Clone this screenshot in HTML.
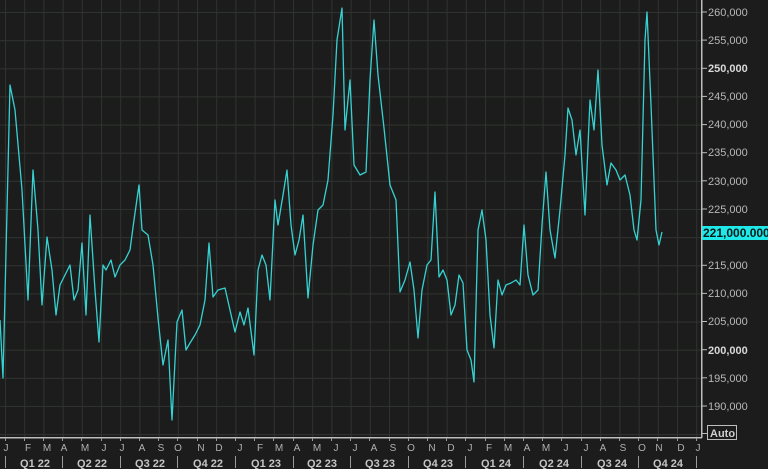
<!DOCTYPE html>
<html><head><meta charset="utf-8"><style>
html,body{margin:0;padding:0;background:#1c1c1c;}
svg{display:block;font-family:"Liberation Sans",sans-serif;}
</style></head><body>
<svg width="768" height="469" viewBox="0 0 768 469" xmlns="http://www.w3.org/2000/svg">
<defs>
<pattern id="gv" patternUnits="userSpaceOnUse" x="5" y="0" width="19.2" height="469"><rect x="0" y="0" width="1" height="469" fill="#2f332f"/></pattern>
<pattern id="gh" patternUnits="userSpaceOnUse" x="0" y="12" width="768" height="28.14"><rect x="0" y="0" width="768" height="1" fill="#2f332f"/></pattern>
</defs>
<rect width="768" height="469" fill="#1c1c1c"/>
<rect x="0" y="0" width="701" height="437" fill="url(#gv)"/>
<rect x="0" y="0" width="701" height="437" fill="url(#gh)"/>
<polyline fill="none" stroke="#36d2d2" stroke-width="1.3" stroke-linejoin="round" points="0,320 3,378 10,85 15,110 22,190 28,300 33,170 38,230 42,305 47,237 52,270 56,315 60,285 65,275 70,265 74,300 78,290 82,243 86,315 90,215 95,290 99,342 103,265 106,270 111,260 115,277 120,265 125,260 130,250 134,220 139,185 142,230 148,235 153,265 158,318 163,365 168,340 172,420 177,322 182,310 186,350 190,343 195,335 200,325 205,300 209,243 213,297 218,290 225,288 230,310 235,332 240,312 244,325 248,308 254,355 258,270 262,255 266,265 270,300 275,200 278,225 283,195 287,170 291,225 295,255 299,240 303,215 308,298 313,245 318,210 323,205 328,180 333,115 337,40 342,8 345,130 350,80 354,165 360,175 366,172 370,80 374,20 378,75 384,128 390,185 396,200 400,292 405,280 410,262 414,290 418,338 422,290 427,265 431,260 435,192 439,277 443,270 447,280 451,315 455,305 459,275 463,283 467,350 471,360 474,382 478,230 482,210 486,240 490,315 494,348 498,280 502,295 506,285 511,283 516,280 520,285 524,225 528,275 533,295 538,290 542,225 546,172 550,230 555,258 560,210 565,155 568,108 572,120 576,155 580,130 585,215 590,100 594,130 598,70 602,145 607,185 611,163 616,170 620,180 625,175 630,195 634,230 637,240 641,200 645,40 647,12 651,105 656,230 659,245 662,232"/>
<!-- axes -->
<rect x="701" y="0" width="1.5" height="438" fill="#bdbdbd"/>
<rect x="0" y="437" width="702" height="1.5" fill="#bdbdbd"/>
<g fill="#bdbdbd">
<rect x="702" y="11.5" width="5" height="1"/><rect x="702" y="39.6" width="5" height="1"/><rect x="702" y="67.8" width="5" height="1"/><rect x="702" y="95.9" width="5" height="1"/><rect x="702" y="124.1" width="5" height="1"/><rect x="702" y="152.2" width="5" height="1"/><rect x="702" y="180.3" width="5" height="1"/><rect x="702" y="208.5" width="5" height="1"/><rect x="702" y="264.8" width="5" height="1"/><rect x="702" y="292.9" width="5" height="1"/><rect x="702" y="321" width="5" height="1"/><rect x="702" y="349.2" width="5" height="1"/><rect x="702" y="377.3" width="5" height="1"/><rect x="702" y="405.5" width="5" height="1"/><rect x="702" y="433" width="5" height="1"/>
</g>
<g font-size="11" fill="#b8b8b8">
<text x="708" y="16">260,000</text>
<text x="708" y="44">255,000</text>
<text x="708" y="72" font-weight="bold" fill="#d8d8d8">250,000</text>
<text x="708" y="100">245,000</text>
<text x="708" y="128">240,000</text>
<text x="708" y="156">235,000</text>
<text x="708" y="185">230,000</text>
<text x="708" y="213">225,000</text>
<text x="708" y="269">215,000</text>
<text x="708" y="297">210,000</text>
<text x="708" y="325">205,000</text>
<text x="708" y="354" font-weight="bold" fill="#d8d8d8">200,000</text>
<text x="708" y="382">195,000</text>
<text x="708" y="410">190,000</text>
</g>
<rect x="702" y="226" width="66" height="14" fill="#1ee8e8"/>
<text x="703" y="237" font-size="12" font-weight="bold" fill="#0a1a1a">221,000.000</text>
<rect x="707.5" y="425.5" width="29" height="14" fill="none" stroke="#bdbdbd" stroke-width="1"/>
<text x="710" y="437" font-size="11" font-weight="bold" fill="#cfcfcf">Auto</text>
<!-- month ticks -->
<g fill="#9a9a9a">
<rect x="5" y="438" width="1" height="3"/><rect x="24" y="438" width="1" height="3"/><rect x="43" y="438" width="1" height="3"/><rect x="62" y="438" width="1" height="3"/><rect x="81" y="438" width="1" height="3"/><rect x="101" y="438" width="1" height="3"/><rect x="120" y="438" width="1" height="3"/><rect x="139" y="438" width="1" height="3"/><rect x="158" y="438" width="1" height="3"/><rect x="177" y="438" width="1" height="3"/><rect x="197" y="438" width="1" height="3"/><rect x="216" y="438" width="1" height="3"/><rect x="235" y="438" width="1" height="3"/><rect x="254" y="438" width="1" height="3"/><rect x="273" y="438" width="1" height="3"/><rect x="293" y="438" width="1" height="3"/><rect x="312" y="438" width="1" height="3"/><rect x="331" y="438" width="1" height="3"/><rect x="350" y="438" width="1" height="3"/><rect x="369" y="438" width="1" height="3"/><rect x="389" y="438" width="1" height="3"/><rect x="408" y="438" width="1" height="3"/><rect x="427" y="438" width="1" height="3"/><rect x="446" y="438" width="1" height="3"/><rect x="465" y="438" width="1" height="3"/><rect x="485" y="438" width="1" height="3"/><rect x="504" y="438" width="1" height="3"/><rect x="523" y="438" width="1" height="3"/><rect x="542" y="438" width="1" height="3"/><rect x="561" y="438" width="1" height="3"/><rect x="581" y="438" width="1" height="3"/><rect x="600" y="438" width="1" height="3"/><rect x="619" y="438" width="1" height="3"/><rect x="638" y="438" width="1" height="3"/><rect x="657" y="438" width="1" height="3"/><rect x="677" y="438" width="1" height="3"/><rect x="696" y="438" width="1" height="3"/>
</g>
<g font-size="10" fill="#b0b0b0" text-anchor="middle">
<text x="6" y="451">J</text><text x="28" y="451">F</text><text x="47" y="451">M</text><text x="64" y="451">A</text><text x="85" y="451">M</text><text x="104" y="451">J</text><text x="122" y="451">J</text><text x="142" y="451">A</text><text x="161" y="451">S</text><text x="178" y="451">O</text><text x="201" y="451">N</text><text x="219" y="451">D</text>
<text x="240" y="451">J</text><text x="260" y="451">F</text><text x="279" y="451">M</text><text x="297" y="451">A</text><text x="317" y="451">M</text><text x="336" y="451">J</text><text x="355" y="451">J</text><text x="374" y="451">A</text><text x="393" y="451">S</text><text x="411" y="451">O</text><text x="432" y="451">N</text><text x="451" y="451">D</text>
<text x="470" y="451">J</text><text x="489" y="451">F</text><text x="508" y="451">M</text><text x="527" y="451">A</text><text x="546" y="451">M</text><text x="566" y="451">J</text><text x="586" y="451">J</text><text x="603" y="451">A</text><text x="623" y="451">S</text><text x="642" y="451">O</text><text x="659" y="451">N</text><text x="681" y="451">D</text><text x="698" y="451">J</text>
</g>
<g fill="#9a9a9a">
<rect x="5" y="456" width="1" height="12"/><rect x="62" y="456" width="1" height="12"/><rect x="120" y="456" width="1" height="12"/><rect x="177" y="456" width="1" height="12"/><rect x="235" y="456" width="1" height="12"/><rect x="293" y="456" width="1" height="12"/><rect x="350" y="456" width="1" height="12"/><rect x="408" y="456" width="1" height="12"/><rect x="465" y="456" width="1" height="12"/><rect x="523" y="456" width="1" height="12"/><rect x="581" y="456" width="1" height="12"/><rect x="638" y="456" width="1" height="12"/><rect x="696" y="456" width="1" height="12"/>
</g>
<g font-size="11" font-weight="bold" fill="#c4c4c4" text-anchor="middle">
<text x="35" y="467">Q1 22</text><text x="92" y="467">Q2 22</text><text x="150" y="467">Q3 22</text><text x="208" y="467">Q4 22</text><text x="266" y="467">Q1 23</text><text x="322" y="467">Q2 23</text><text x="380" y="467">Q3 23</text><text x="438" y="467">Q4 23</text><text x="496" y="467">Q1 24</text><text x="554" y="467">Q2 24</text><text x="612" y="467">Q3 24</text><text x="668" y="467">Q4 24</text>
</g>
</svg>
</body></html>
